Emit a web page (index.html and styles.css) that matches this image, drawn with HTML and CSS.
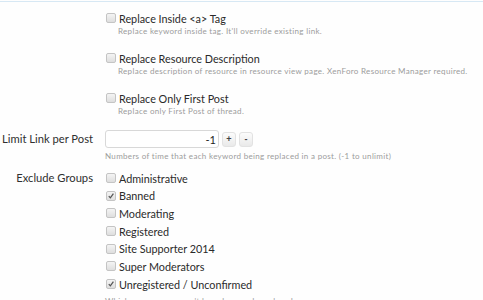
FILE: index.html
```html
<!DOCTYPE html>
<html lang="en">
<head>
  <meta charset="UTF-8">
  <title>Keyword Replace Options</title>
  <link rel="stylesheet" href="styles.css">
</head>
<body>
  <div class="options">
    <dl class="row">
      <dt></dt>
      <dd>
        <label class="check"><span class="box"></span>Replace Inside &lt;a&gt; Tag</label>
        <p class="explain">Replace keyword inside tag. It'll override existing link.</p>
      </dd>
    </dl>
    <dl class="row">
      <dt></dt>
      <dd>
        <label class="check"><span class="box"></span>Replace Resource Description</label>
        <p class="explain">Replace description of resource in resource view page. XenForo Resource Manager required.</p>
      </dd>
    </dl>
    <dl class="row">
      <dt></dt>
      <dd>
        <label class="check"><span class="box"></span>Replace Only First Post</label>
        <p class="explain">Replace only First Post of thread.</p>
      </dd>
    </dl>
    <dl class="row spin-row">
      <dt>Limit Link per Post</dt>
      <dd>
        <div class="spinbox">
          <input type="text" value="-1">
          <button type="button">+</button>
          <button type="button">-</button>
        </div>
        <p class="explain">Numbers of time that each keyword being replaced in a post. (-1 to unlimit)</p>
      </dd>
    </dl>
    <dl class="row groups">
      <dt>Exclude Groups</dt>
      <dd>
        <ul class="check-list">
          <li><label class="check"><span class="box"></span>Administrative</label></li>
          <li><label class="check"><span class="box on"><svg viewBox="0 0 9 9"><path d="M2 4.6 L3.8 6.6 L7.2 1.8" /></svg></span>Banned</label></li>
          <li><label class="check"><span class="box"></span>Moderating</label></li>
          <li><label class="check"><span class="box"></span>Registered</label></li>
          <li><label class="check"><span class="box"></span>Site Supporter 2014</label></li>
          <li><label class="check"><span class="box"></span>Super Moderators</label></li>
          <li><label class="check"><span class="box on"><svg viewBox="0 0 9 9"><path d="M2 4.6 L3.8 6.6 L7.2 1.8" /></svg></span>Unregistered / Unconfirmed</label></li>
        </ul>
        <p class="explain">Which user groups won't have keywords replaced.</p>
      </dd>
    </dl>
  </div>
</body>
</html>
```

FILE: styles.css
```css
body {
  margin: 0;
  background: #fefefe;
  font-family: Lato, "Open Sans", sans-serif;
  color: #333;
  overflow: hidden;
}

.options {
  border-top: 1px solid #d7e8f4;
  margin-top: 1px;
  padding-top: 9px;
}

.row {
  display: flex;
  margin: 0 0 15px;
}

.row dt {
  width: 93px;
  flex: none;
  text-align: right;
  white-space: nowrap;
  font-size: 11.2px;
  color: #2f2f2f;
  padding-right: 12px;
}

.row dd {
  margin: 0;
}

.check {
  display: flex;
  align-items: center;
  font-size: 10.8px;
  color: #2a2a2a;
  height: 14px;
  padding-left: 1px;
}

.box {
  width: 8px;
  height: 8px;
  border: 1px solid #c4c4c4;
  border-radius: 2px;
  background: linear-gradient(#f4f4f4, #dedede);
  margin-right: 3px;
  flex: none;
  display: flex;
}

.box svg {
  width: 8px;
  height: 8px;
  fill: none;
  stroke: #555;
  stroke-width: 1.4;
}

.explain {
  margin: 1px 0 0 13px;
  font-size: 8px;
  color: #9c9c9c;
  letter-spacing: 0.32px;
}

.spin-row {
  margin-top: -1px;
  margin-bottom: 10px;
}

.spin-row dt {
  line-height: 18px;
}

.spinbox {
  display: flex;
  align-items: center;
  gap: 3px;
}

.spinbox input {
  width: 108px;
  height: 16px;
  box-sizing: content-box;
  padding: 0 2px;
  border: 1px solid #d8d8d8;
  border-radius: 3px;
  text-align: right;
  font-family: inherit;
  font-size: 11px;
  color: #222;
  margin: 0;
}

.spinbox button {
  width: 14px;
  height: 15px;
  padding: 0;
  border: 1px solid #e2e2e2;
  border-radius: 3px;
  background: linear-gradient(#fcfcfc, #e9e9e9);
  font-size: 9px;
  line-height: 12px;
  font-weight: bold;
  color: #444;
}

.spinbox + .explain {
  margin-left: 0;
  margin-top: 3px;
}

.groups dt {
  line-height: 14px;
}

.check-list {
  list-style: none;
  margin: 0;
  padding: 0;
}

.check-list li {
  height: 17.7px;
}

.groups .explain {
  margin-left: 0;
}
```
